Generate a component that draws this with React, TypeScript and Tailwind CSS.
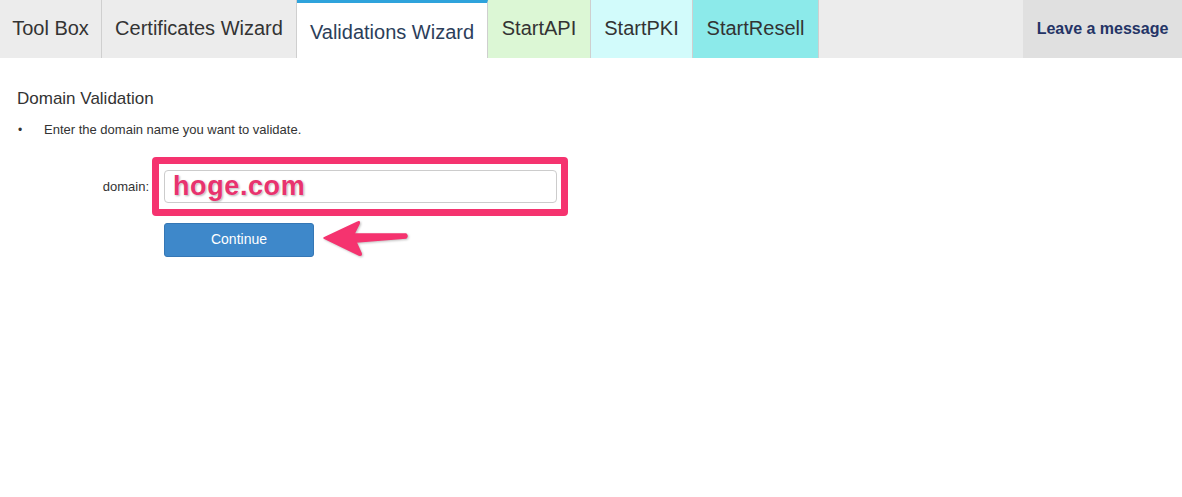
import React from 'react';

type Tab = {
  label: string;
  width: string;
  bg: string;
  active?: boolean;
};

const tabs: Tab[] = [
  { label: 'Tool Box', width: 'w-[102px]', bg: 'bg-[#ececec]' },
  { label: 'Certificates Wizard', width: 'w-[195px]', bg: 'bg-[#ececec]' },
  { label: 'Validations Wizard', width: 'w-[191px]', bg: 'bg-white', active: true },
  { label: 'StartAPI', width: 'w-[103px]', bg: 'bg-[#dcf7d5]' },
  { label: 'StartPKI', width: 'w-[102px]', bg: 'bg-[#d2fbfb]' },
  { label: 'StartResell', width: 'w-[126px]', bg: 'bg-[#8ceaea]' },
];

const Arrow = () => (
  <svg width="90" height="40" viewBox="0 0 90 40" className="ml-2">
    <path
      d="M2 18 L36 2 Q38 1 37 4 L32 14 L84 14 Q86 16 84 18 L34 22 L39 33 Q40 36 37 35 Z"
      fill="#f5336f"
      stroke="#f5336f"
      strokeWidth="1.5"
      strokeLinejoin="round"
      style={{ filter: 'drop-shadow(1px 1px 1px rgba(0,0,0,0.25))' }}
    />
  </svg>
);

export default function App() {
  return (
    <div className="w-[1182px] h-[497px] bg-white font-['Liberation_Sans',Arial,sans-serif] text-[#333]">
      <div className="flex h-[58px] bg-[#ececec]">
        {tabs.map((t) => (
          <div
            key={t.label}
            className={`${t.width} ${t.bg} flex justify-center border-r border-[#cfcfcf] text-[20px] ${
              t.active
                ? 'border-t-[3px] border-t-[#2ea3dc] pt-[14px] text-[#2c3e5a]'
                : 'pt-[13px] text-[#333]'
            }`}
          >
            {t.label}
          </div>
        ))}
        <div className="flex-1" />
        <div className="w-[159px] bg-[#e0e0e0] flex items-center justify-center text-[16px] font-bold text-[#243466]">
          Leave a message
        </div>
      </div>

      <div className="px-[17px] pt-[31px]">
        <h2 className="text-[17px] leading-[20px] text-[#333]">Domain Validation</h2>
        <div className="flex items-center mt-[11px] text-[13px] text-[#333]">
          <span className="w-[27px] pl-[1px] text-[12px]">•</span>
          <span>Enter the domain name you want to validate.</span>
        </div>

        <div className="flex items-center mt-[17px]">
          <span className="w-[133px] text-right text-[13px] pr-[1px] pt-[1px]">domain:</span>
          <div className="ml-[2px] w-[416px] h-[59px] border-[7px] border-[#f5336f] rounded-[4px] flex items-center pl-[5px]">
            <div className="w-[393px] h-[33px] border border-[#cccccc] rounded-[4px] bg-white flex items-center pl-[8px]">
              <span
                className="text-[27px] font-bold text-[#e8336e] tracking-[0.6px]"
                style={{ textShadow: '0 0 2px #fff, 1px 1px 2px rgba(0,0,0,0.35)' }}
              >
                hoge.com
              </span>
            </div>
          </div>
        </div>

        <div className="flex items-center ml-[147px] mt-[4px]">
          <button className="w-[150px] h-[34px] rounded-[3px] bg-[#3e88ca] border border-[#3577b5] text-white text-[14px]">
            Continue
          </button>
          <Arrow />
        </div>
      </div>
    </div>
  );
}
